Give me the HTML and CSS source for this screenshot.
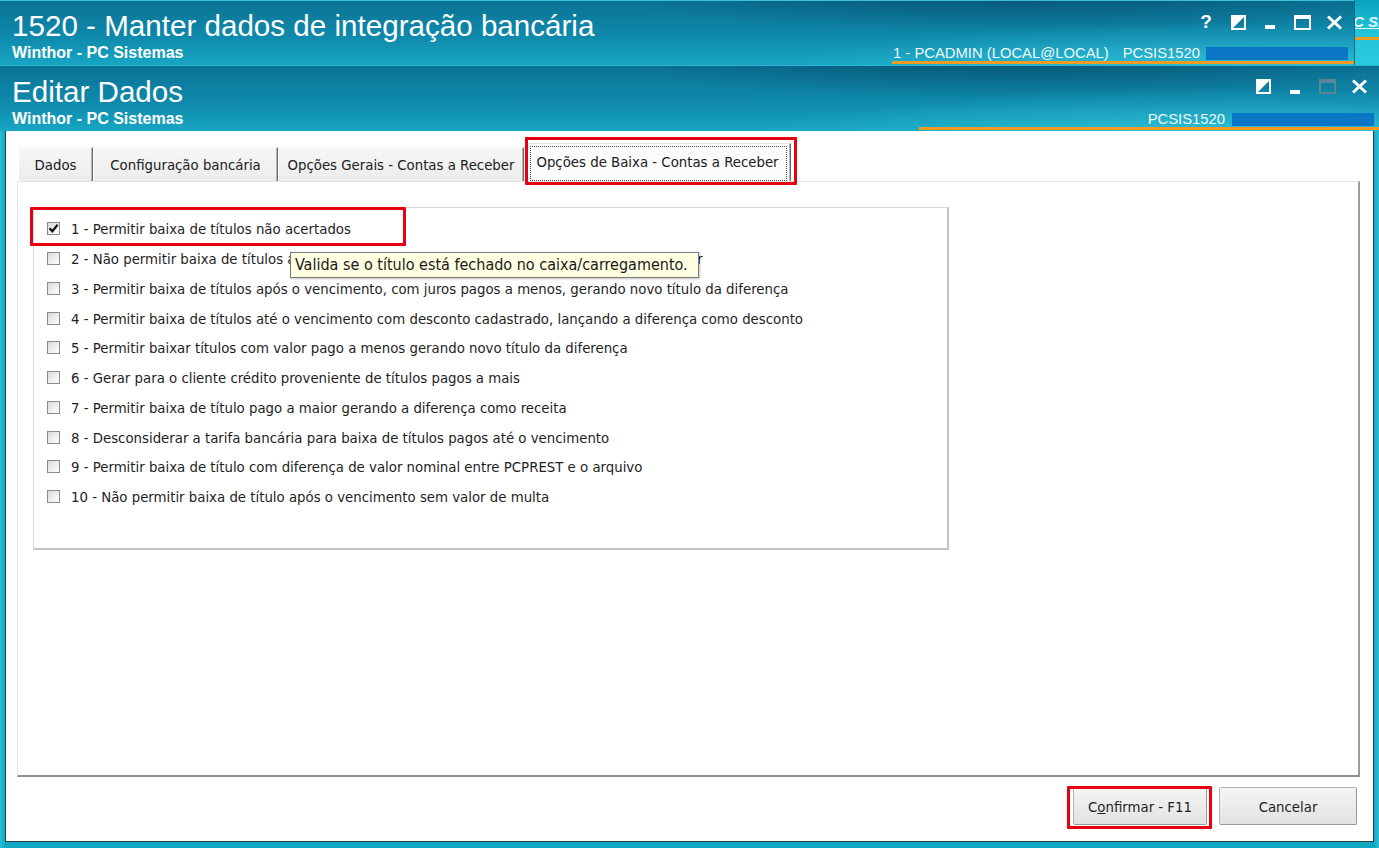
FILE: index.html
```html
<!DOCTYPE html>
<html lang="pt-BR">
<head>
    <meta charset="UTF-8">
    <meta name="viewport" content="width=device-width, initial-scale=1.0">
    <title>1520 - Manter dados de integração bancária</title>
    <link rel="stylesheet" href="styles.css">
</head>
<body>
    <div class="top-row">
        <header class="titlebar main-bar">
            <div class="title-text">
                <h1>1520 - Manter dados de integração bancária</h1>
                <div class="sub">Winthor - PC Sistemas</div>
            </div>
            <div class="title-side">
                <div class="controls">
                    <span class="ctl help">?</span>
                    <span class="ctl">
                        <svg width="15" height="15" viewBox="0 0 15 15"><rect x="1" y="1" width="13" height="13" fill="none" stroke="#fff" stroke-width="2"/><path d="M1 1H14L1 14Z" fill="#fff"/></svg>
                    </span>
                    <span class="ctl">
                        <svg width="12" height="15" viewBox="0 0 12 15"><rect x="1" y="10" width="10" height="4" fill="#fff"/></svg>
                    </span>
                    <span class="ctl">
                        <svg width="17" height="15" viewBox="0 0 17 15"><rect x="1" y="1" width="15" height="13" fill="none" stroke="#fff" stroke-width="2"/><rect x="1" y="1" width="15" height="3" fill="#fff"/></svg>
                    </span>
                    <span class="ctl">
                        <svg width="17" height="15" viewBox="0 0 17 15"><path d="M2 1.5L15 13.5M15 1.5L2 13.5" stroke="#fff" stroke-width="3"/></svg>
                    </span>
                </div>
                <div class="status status-main">
                    <span>1 - PCADMIN (LOCAL@LOCAL)</span>
                    <span class="prog">PCSIS1520</span>
                    <span class="bluebar"></span>
                </div>
            </div>
        </header>
        <div class="peek"><span class="peek-link">PC Sistemas</span></div>
    </div>

    <header class="titlebar dialog-bar">
        <div class="title-text">
            <h1>Editar Dados</h1>
            <div class="sub">Winthor - PC Sistemas</div>
        </div>
        <div class="title-side">
            <div class="controls">
                <span class="ctl">
                    <svg width="15" height="15" viewBox="0 0 15 15"><rect x="1" y="1" width="13" height="13" fill="none" stroke="#fff" stroke-width="2"/><path d="M1 1H14L1 14Z" fill="#fff"/></svg>
                </span>
                <span class="ctl">
                    <svg width="12" height="15" viewBox="0 0 12 15"><rect x="1" y="11" width="10" height="4" fill="#fff"/></svg>
                </span>
                <span class="ctl">
                    <svg width="17" height="15" viewBox="0 0 17 15"><rect x="1" y="1" width="15" height="13" fill="none" stroke="#5a8796" stroke-width="2"/><rect x="1" y="1" width="15" height="3" fill="#5a8796"/></svg>
                </span>
                <span class="ctl">
                    <svg width="17" height="15" viewBox="0 0 17 15"><path d="M2 1.5L15 13.5M15 1.5L2 13.5" stroke="#fff" stroke-width="3"/></svg>
                </span>
            </div>
            <div class="status status-dialog">
                <span class="prog">PCSIS1520</span>
                <span class="bluebar"></span>
            </div>
        </div>
    </header>

    <div class="frame">
        <div class="dialog">
            <div class="tabs">
                <div class="tab tab-dados">Dados</div>
                <div class="tab tab-config">Configuração bancária</div>
                <div class="tab tab-gerais">Opções Gerais - Contas a Receber</div>
                <div class="tab tab-baixa active">Opções de Baixa - Contas a Receber</div>
            </div>

            <div class="panel">
                <div class="group">
                    <div class="opt opt-marked">
                        <span class="chk checked"><svg width="11" height="11" viewBox="0 0 11 11"><path d="M1.5 5.3L4.3 8.3L9.6 1.8" fill="none" stroke="#111" stroke-width="2.2"/></svg></span>
                        <span>1 - Permitir baixa de títulos não acertados</span>
                    </div>
                    <div class="opt">
                        <span class="chk"></span>
                        <span>2 - Não permitir baixa de títulos acertados no caixa/carregamento ainda não fechado p/ baixar</span>
                        <div class="tooltip">Valida se o título está fechado no caixa/carregamento.</div>
                    </div>
                    <div class="opt">
                        <span class="chk"></span>
                        <span>3 - Permitir baixa de títulos após o vencimento, com juros pagos a menos, gerando novo título da diferença</span>
                    </div>
                    <div class="opt">
                        <span class="chk"></span>
                        <span>4 - Permitir baixa de títulos até o vencimento com desconto cadastrado, lançando a diferença como desconto</span>
                    </div>
                    <div class="opt">
                        <span class="chk"></span>
                        <span>5 - Permitir baixar títulos com valor pago a menos gerando novo título da diferença</span>
                    </div>
                    <div class="opt">
                        <span class="chk"></span>
                        <span>6 - Gerar para o cliente crédito proveniente de títulos pagos a mais</span>
                    </div>
                    <div class="opt">
                        <span class="chk"></span>
                        <span>7 - Permitir baixa de título pago a maior gerando a diferença como receita</span>
                    </div>
                    <div class="opt">
                        <span class="chk"></span>
                        <span>8 - Desconsiderar a tarifa bancária para baixa de títulos pagos até o vencimento</span>
                    </div>
                    <div class="opt">
                        <span class="chk"></span>
                        <span>9 - Permitir baixa de título com diferença de valor nominal entre PCPREST e o arquivo</span>
                    </div>
                    <div class="opt">
                        <span class="chk"></span>
                        <span>10 - Não permitir baixa de título após o vencimento sem valor de multa</span>
                    </div>
                </div>
            </div>

            <div class="actions">
                <span class="btn-mark"><button class="btn btn-confirm">C<u>o</u>nfirmar - F11</button></span>
                <button class="btn btn-cancel">Cancelar</button>
            </div>
        </div>
    </div>
</body>
</html>
```

FILE: styles.css
```css
*, *::before, *::after {
    box-sizing: border-box;
}
html, body {
    margin: 0;
    padding: 0;
}
body {
    width: 1379px;
    height: 848px;
    overflow: hidden;
    background-color: #12a9c4;
    font-family: "DejaVu Sans Condensed", "DejaVu Sans", sans-serif;
    font-stretch: condensed;
    color: #202020;
}

/* title bars */
.top-row {
    display: flex;
    height: 65px;
}
.titlebar {
    display: flex;
    justify-content: space-between;
    color: #fff;
    font-family: "Liberation Sans", Arial, sans-serif;
    background:
        radial-gradient(ellipse 700px 70px at 1250px 110%, rgba(70, 215, 235, 0.55), rgba(70, 215, 235, 0) 70%),
        radial-gradient(ellipse 560px 60px at 1020px -12px, rgba(0, 45, 75, 0.45), rgba(0, 45, 75, 0) 75%),
        linear-gradient(180deg, #0b7395 0%, #0f89ab 55%, #17a6c3 100%);
}
.main-bar {
    width: 1354px;
    height: 65px;
    border-top: 1px solid #3ec0d6;
}
.dialog-bar {
    height: 66px;
    border-top: 1px solid #2fb3cc;
}
.title-text {
    padding: 8px 0 0 12px;
}
.title-text h1 {
    margin: 0;
    font-size: 29.6px;
    font-weight: normal;
    line-height: 34px;
}
.title-text .sub {
    margin-top: 1px;
    font-size: 16px;
    font-weight: bold;
    line-height: 18px;
}
.dialog-bar .title-text {
    padding-top: 9px;
}
.title-side {
    display: flex;
    flex-direction: column;
    align-items: flex-end;
}
.controls {
    display: flex;
    height: 20px;
    margin-top: 11px;
    margin-right: 4px;
}
.dialog-bar .controls {
    margin-top: 10px;
}
.ctl {
    width: 32px;
    height: 20px;
    display: flex;
    align-items: center;
    justify-content: center;
}
.ctl.help {
    font-size: 19px;
    font-weight: bold;
}
.status {
    display: flex;
    align-items: center;
    justify-content: flex-end;
    gap: 6px;
    width: 462px;
    height: 19px;
    padding-right: 6px;
    font-size: 14.8px;
    line-height: 16px;
    color: #eef8fb;
    border-bottom: 3px solid #f19a21;
}
.status-main {
    margin-top: 13px;
}
.status-main .prog {
    margin-left: 8px;
}
.status-dialog {
    width: 460px;
    margin-top: 15px;
    padding-right: 5px;
    gap: 7px;
}
.bluebar {
    width: 142px;
    height: 13px;
    background-color: #0b76c6;
}
.peek {
    width: 25px;
    height: 65px;
    overflow: hidden;
    border-left: 1px solid #0b6c8a;
    background: linear-gradient(180deg, #0aa1bd 0%, #22c2d9 45%, #2acae0 100%);
}
.peek-link {
    display: block;
    margin-left: -12px;
    padding-top: 13px;
    height: 40px;
    white-space: nowrap;
    font-family: "Liberation Sans", Arial, sans-serif;
    font-size: 15px;
    font-weight: bold;
    font-style: italic;
    text-decoration: underline;
    color: #e4f5ff;
    border-bottom: 3px solid #f19a21;
}

/* dialog */
.frame {
    height: 717px;
    padding: 0 5px 6px 5px;
    background: linear-gradient(90deg, #27bfd6 0px, #10a9c4 5px, #10a9c4 1374px, #27bfd6 1379px);
}
.dialog {
    height: 711px;
    display: flex;
    flex-direction: column;
    padding: 12px 13px 16px 11px;
    background-color: #fff;
    border: 1px solid #2f3b40;
    border-top: none;
}

/* tabs */
.tabs {
    display: flex;
    align-items: flex-end;
    height: 38px;
    padding-left: 1px;
    font-size: 14.8px;
}
.tab {
    position: relative;
    height: 34px;
    display: flex;
    align-items: center;
    justify-content: center;
    white-space: nowrap;
    background: linear-gradient(180deg, #f6f6f6, #ececec);
    border-top: 1px solid #f9f9f9;
    border-left: 1px solid #ffffff;
    border-right: 1px solid #6c6c6c;
    box-shadow: inset -1px 0 0 #b4b4b4;
    padding-bottom: 1px;
}
.tab-dados {
    width: 75px;
}
.tab-config {
    width: 185px;
}
.tab-gerais {
    width: 246px;
}
.tab.active {
    width: 264px;
    height: 38px;
    margin-left: 3px;
    padding-bottom: 3px;
    padding-right: 3px;
    background: #fbfbfb;
    border-top: 1px solid #e4e4e4;
    border-left: 1px solid #e4e4e4;
    z-index: 1;
}
.tab.active::before {
    content: "";
    position: absolute;
    left: 2px;
    right: 3px;
    top: 2px;
    bottom: 0;
    border: 1px dotted #4a4a4a;
}
.tab.active::after {
    content: "";
    position: absolute;
    left: -3px;
    top: -7px;
    width: 272px;
    height: 48px;
    border: 3px solid #e60012;
    border-radius: 1px;
}

/* tab page */
.panel {
    height: 596px;
    padding: 25px 0 0 15px;
    border-top: 1px solid #e3e3e3;
    border-left: 1px solid #e6e6e6;
    border-right: 2px solid #9c9c9c;
    border-bottom: 2px solid #8e8e8e;
}
.group {
    width: 916px;
    height: 343px;
    padding: 6px 0 0 13px;
    display: grid;
    grid-auto-rows: 29.75px;
    align-content: start;
    border-top: 1px solid #d8d8d8;
    border-left: 1px solid #d8d8d8;
    border-right: 2px solid #c4c4c4;
    border-bottom: 2px solid #c4c4c4;
    font-size: 14.8px;
}
.opt {
    position: relative;
    display: flex;
    align-items: center;
    gap: 11px;
    white-space: nowrap;
    color: #1e1e1e;
}
.chk {
    flex: none;
    width: 13px;
    height: 13px;
    display: flex;
    align-items: center;
    justify-content: center;
    border: 1px solid #8b8b8b;
    background: linear-gradient(135deg, #d8d8d8 0%, #f0f0f0 55%, #fdfdfd 100%);
}
.opt-marked::after {
    content: "";
    position: absolute;
    left: -17px;
    top: -7px;
    width: 376px;
    height: 39px;
    border: 3px solid #e60012;
    border-radius: 1px;
}
.tooltip {
    position: absolute;
    left: 243px;
    top: 8px;
    width: 409px;
    height: 26px;
    padding-left: 4px;
    font-size: 16px;
    line-height: 24px;
    color: #1a1a1a;
    background-color: #ffffe1;
    border: 1px solid #7a7a7a;
    box-shadow: 1px 1px 2px rgba(0, 0, 0, 0.25);
    z-index: 2;
}

/* buttons */
.actions {
    display: flex;
    justify-content: flex-end;
    gap: 12px;
    margin-top: 10px;
    padding-right: 3px;
}
.btn {
    height: 38px;
    padding: 0;
    font-family: inherit;
    font-stretch: condensed;
    font-size: 14.8px;
    color: #1e1e1e;
    background: linear-gradient(180deg, #f5f5f5 0%, #ececec 50%, #e2e2e2 100%);
    border: 1px solid #b4b4b4;
    border-right-color: #9a9a9a;
    border-bottom-color: #9a9a9a;
    border-radius: 2px;
}
.btn-confirm {
    width: 134px;
}
.btn-cancel {
    width: 138px;
}
.btn-mark {
    position: relative;
    display: flex;
}
.btn-mark::after {
    content: "";
    position: absolute;
    left: -6px;
    top: -1px;
    right: -5px;
    bottom: -4px;
    border: 3px solid #e60012;
    border-radius: 1px;
}
```
